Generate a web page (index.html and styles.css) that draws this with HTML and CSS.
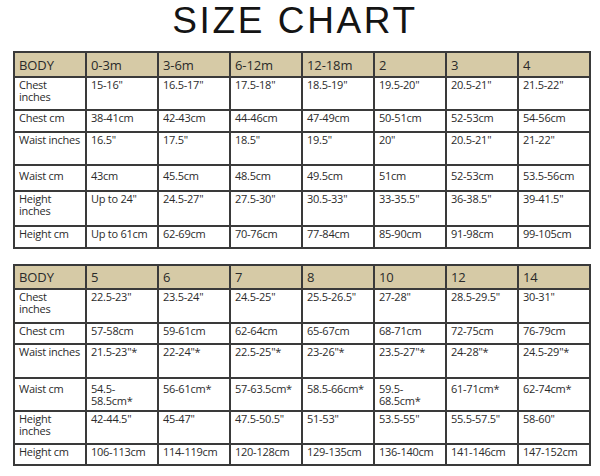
FILE: index.html
```html
<!DOCTYPE html>
<html>
<head>
<meta charset="utf-8">
<link rel="stylesheet" href="styles.css">
</head>
<body>
<div class="page">
  <h1 class="title">SIZE CHART</h1>
  <table class="chart">
    <tr class="head r25"><td>BODY</td><td>0-3m</td><td>3-6m</td><td>6-12m</td><td>12-18m</td><td>2</td><td>3</td><td>4</td></tr>
    <tr class="r33"><td>Chest<br>inches</td><td>15-16"</td><td>16.5-17"</td><td>17.5-18"</td><td>18.5-19"</td><td>19.5-20"</td><td>20.5-21"</td><td>21.5-22"</td></tr>
    <tr class="r22"><td>Chest cm</td><td>38-41cm</td><td>42-43cm</td><td>44-46cm</td><td>47-49cm</td><td>50-51cm</td><td>52-53cm</td><td>54-56cm</td></tr>
    <tr class="r33"><td>Waist inches</td><td>16.5"</td><td>17.5"</td><td>18.5"</td><td>19.5"</td><td>20"</td><td>20.5-21"</td><td>21-22"</td></tr>
    <tr class="r26 mid"><td>Waist cm</td><td>43cm</td><td>45.5cm</td><td>48.5cm</td><td>49.5cm</td><td>51cm</td><td>52-53cm</td><td>53.5-56cm</td></tr>
    <tr class="r35"><td>Height<br>inches</td><td>Up to 24"</td><td>24.5-27"</td><td>27.5-30"</td><td>30.5-33"</td><td>33-35.5"</td><td>36-38.5"</td><td>39-41.5"</td></tr>
    <tr class="r22"><td>Height cm</td><td>Up to 61cm</td><td>62-69cm</td><td>70-76cm</td><td>77-84cm</td><td>85-90cm</td><td>91-98cm</td><td>99-105cm</td></tr>
  </table>
  <table class="chart second">
    <tr class="head r24"><td>BODY</td><td>5</td><td>6</td><td>7</td><td>8</td><td>10</td><td>12</td><td>14</td></tr>
    <tr class="r34"><td>Chest<br>inches</td><td>22.5-23"</td><td>23.5-24"</td><td>24.5-25"</td><td>25.5-26.5"</td><td>27-28"</td><td>28.5-29.5"</td><td>30-31"</td></tr>
    <tr class="r21"><td>Chest cm</td><td>57-58cm</td><td>59-61cm</td><td>62-64cm</td><td>65-67cm</td><td>68-71cm</td><td>72-75cm</td><td>76-79cm</td></tr>
    <tr class="r34"><td>Waist inches</td><td>21.5-23"*</td><td>22-24"*</td><td>22.5-25"*</td><td>23-26"*</td><td>23.5-27"*</td><td>24-28"*</td><td>24.5-29"*</td></tr>
    <tr class="r33 mid"><td>Waist cm</td><td>54.5-<br>58.5cm*</td><td>56-61cm*</td><td>57-63.5cm*</td><td>58.5-66cm*</td><td>59.5-<br>68.5cm*</td><td>61-71cm*</td><td>62-74cm*</td></tr>
    <tr class="r33"><td>Height<br>inches</td><td>42-44.5"</td><td>45-47"</td><td>47.5-50.5"</td><td>51-53"</td><td>53.5-55"</td><td>55.5-57.5"</td><td>58-60"</td></tr>
    <tr class="r21"><td>Height cm</td><td>106-113cm</td><td>114-119cm</td><td>120-128cm</td><td>129-135cm</td><td>136-140cm</td><td>141-146cm</td><td>147-152cm</td></tr>
  </table>
</div>
</body>
</html>
```
FILE: styles.css
```css
html, body {
  margin: 0;
  padding: 0;
  background: #ffffff;
}
.page {
  width: 600px;
  height: 476px;
  overflow: hidden;
  display: flex;
  flex-direction: column;
}
.title {
  margin: 0 0 0 -10px;
  height: 51px;
  flex: none;
  text-align: center;
  font-family: "Liberation Sans", Arial, sans-serif;
  font-weight: 400;
  font-size: 37px;
  line-height: 42px;
  letter-spacing: 2.6px;
  color: #141414;
}
.chart {
  margin-left: 13px;
  width: 578px;
  border-collapse: collapse;
  table-layout: fixed;
  font-family: "Open Sans", sans-serif;
  font-size: 11px;
  line-height: 12px;
  color: #2b2b2b;
  border: 2px solid #333;
}
.chart td {
  border: 2px solid #3a3a3a;
  padding: 1px 0 0 4px;
  vertical-align: top;
  letter-spacing: -0.25px;
  white-space: nowrap;
  overflow: hidden;
}
.chart .mid td {
  padding-top: 4px;
}
.chart .head td {
  background: #d6caa6;
  font-size: 13px;
  vertical-align: middle;
  padding-top: 0;
  letter-spacing: -0.1px;
  color: #2a2a2a;
}
.second {
  margin-top: 15px;
}
.r21 { height: 21px; }
.r22 { height: 22px; }
.r24 { height: 24px; }
.r25 { height: 25px; }
.r26 { height: 26px; }
.r33 { height: 33px; }
.r34 { height: 34px; }
.r35 { height: 35px; }
```
